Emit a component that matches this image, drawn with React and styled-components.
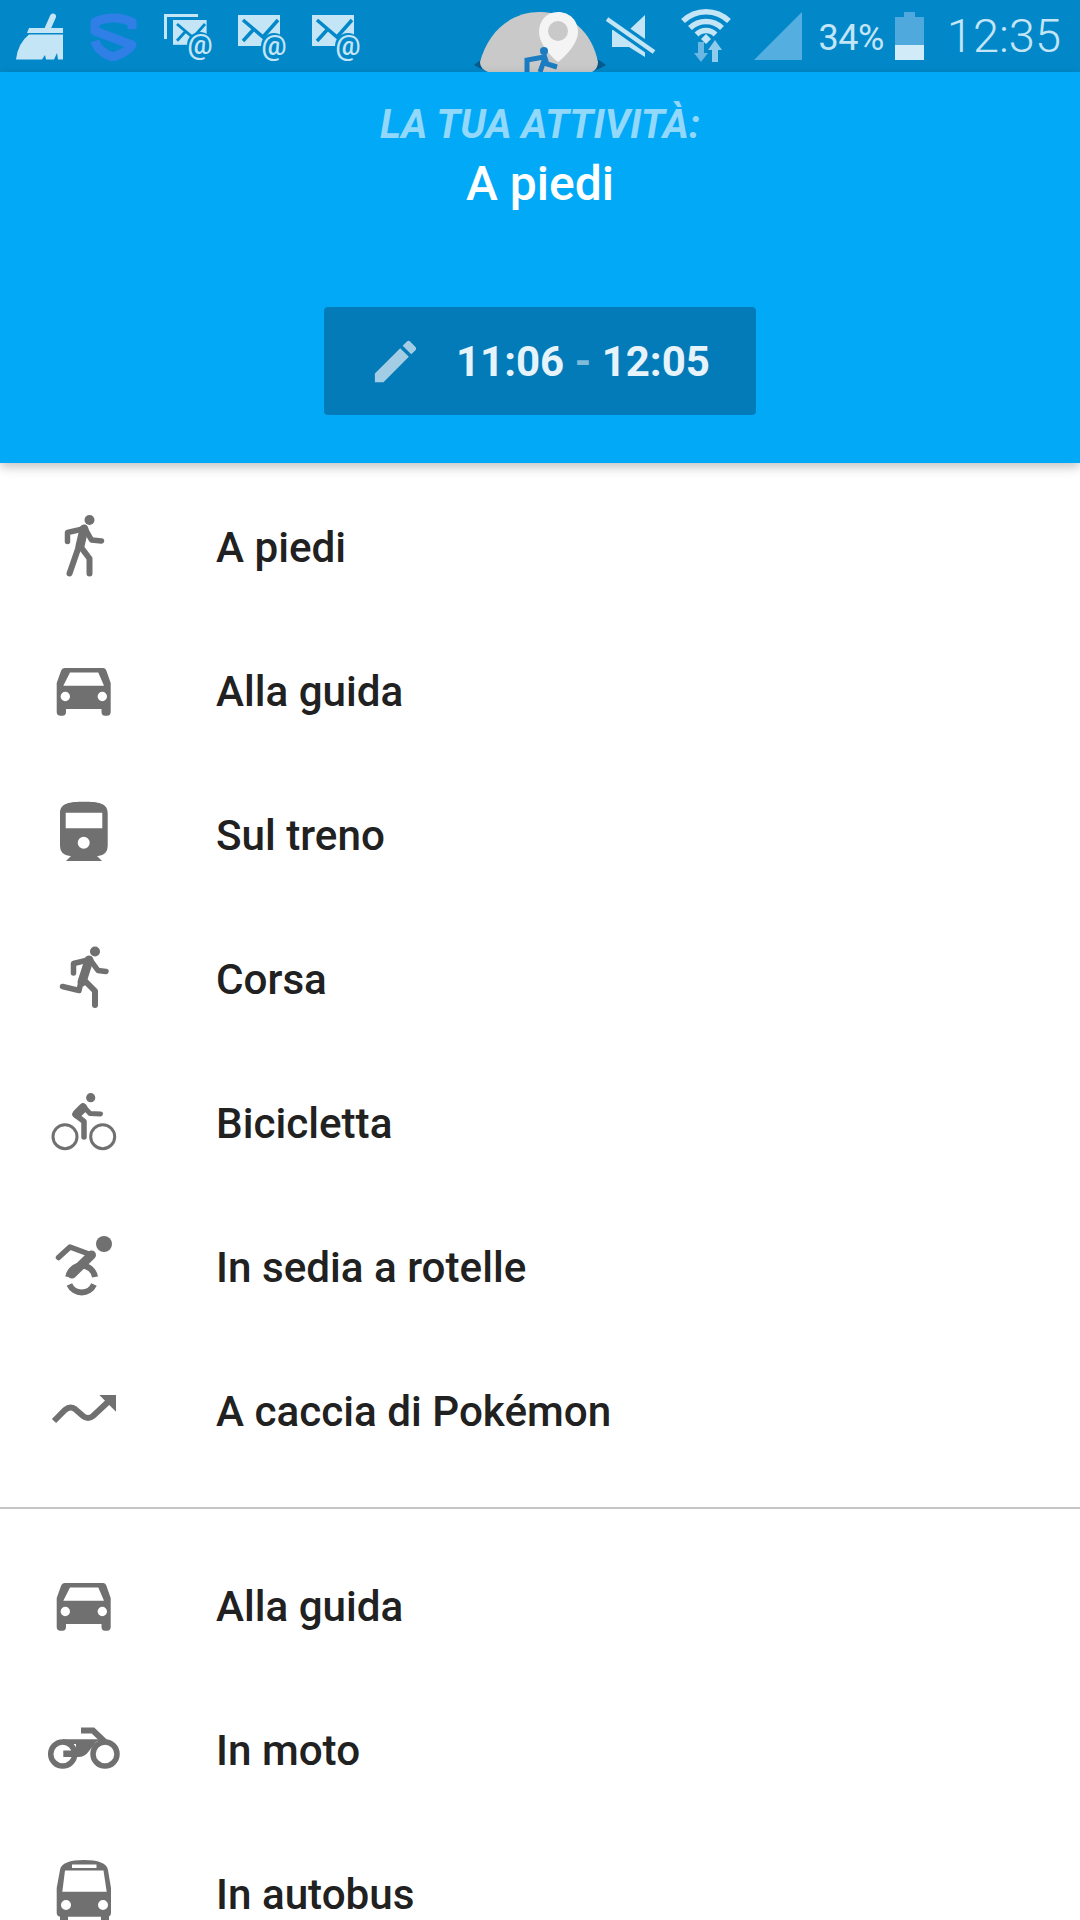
import React from 'react';
import styled, { createGlobalStyle } from 'styled-components';

const STATUS_BG = '#0288c9';
const STATUS_FG = '#c4e5f6';
const ICON_GREY = '#707070';

const GlobalStyle = createGlobalStyle`
  html, body {
    margin: 0;
    padding: 0;
    background: #fff;
  }
  body {
    font-family: Roboto, "Liberation Sans", sans-serif;
  }
`;

const Screen = styled.div`
  width: 1080px;
  height: 1920px;
  overflow: hidden;
  background: #fff;
`;

const StatusBar = styled.div`
  position: relative;
  height: 72px;
  display: flex;
  align-items: flex-start;
  background: ${STATUS_BG};
  color: ${STATUS_FG};
`;

const NotifyIcons = styled.div`
  display: flex;
  align-items: flex-start;
  padding: 13px 0 0 16px;
  gap: 26px;
`;

const SystemIcons = styled.div`
  margin-left: auto;
  display: flex;
  align-items: flex-start;
  padding-right: 19px;
`;

const StatusSvg = styled.svg`
  display: block;
  flex: none;
  margin-left: ${(p) => p.$ml || 0}px;
  margin-top: ${(p) => p.$mt || 0}px;
`;

const Percent = styled.span`
  margin: 20px 0 0 17px;
  font-size: 36px;
  line-height: 36px;
  letter-spacing: -0.5px;
`;

const Clock = styled.span`
  margin: 11px 0 0 23px;
  font-size: 47px;
  line-height: 50px;
  font-weight: 300;
`;

const FloatingBubble = styled.svg`
  position: absolute;
  left: 474px;
  top: 12px;
`;

const Header = styled.header`
  position: relative;
  height: 391px;
  box-sizing: border-box;
  padding-top: 33px;
  display: flex;
  flex-direction: column;
  align-items: center;
  background: #02a9f7;
  box-shadow: 0 4px 10px rgba(0, 0, 0, 0.24);
`;

const Eyebrow = styled.div`
  font-size: 40px;
  line-height: 40px;
  font-weight: 700;
  font-style: italic;
  color: #92d8fb;
`;

const ActivityName = styled.div`
  margin-top: 11px;
  font-size: 48px;
  line-height: 56px;
  font-weight: 500;
  color: #fff;
`;

const TimeButton = styled.div`
  margin-top: 95px;
  width: 432px;
  height: 108px;
  box-sizing: border-box;
  padding-left: 44px;
  display: flex;
  align-items: center;
  gap: 33px;
  background: #047bb9;
  border-radius: 4px;
  color: #e6f3fb;
  font-size: 42px;
  font-weight: 700;
`;

const Dash = styled.span`
  color: #7fbcdc;
`;

const List = styled.div`
  padding-top: 12px;
`;

const Row = styled.div`
  height: 144px;
  display: flex;
  align-items: center;
  padding-left: 48px;
  gap: 96px;
  font-size: 42.2px;
  font-weight: 500;
  color: #212121;
`;

const RowIcon = styled.svg`
  display: block;
  flex: none;
  width: 72px;
  height: 72px;
  overflow: visible;
  color: ${ICON_GREY};
`;

const Divider = styled.div`
  height: 2px;
  margin: 24px 0 25px;
  background: #c6c6c6;
`;

const Line = ({ d, w = 5 }) => (
  <path d={d} fill="none" stroke="currentColor" strokeWidth={w} strokeLinecap="round" strokeLinejoin="round" />
);

const Walk = () => (
  <>
    <circle cx="41.5" cy="9" r="5" fill="currentColor" />
    <Line d="M37 17.5L19.5 21.5V30.5" w={5.5} />
    <Line d="M37 17.5L43.5 29L53.5 30" w={5.5} />
    <Line d="M36 18L32 35" w={9} />
    <Line d="M31 35L21.5 62.5" w={6} />
    <Line d="M32 35L41.5 47.5V62.5" w={6} />
  </>
);

const Car = () => (
  <path
    fill="currentColor"
    fillRule="evenodd"
    d="M17 13H55Q57.5 13 58.5 16L62.7 28V57Q62.7 60.7 59 60.7H57Q53.5 60.7 53.5 57V54H18V57Q18 60.7 14.5 60.7H12.5Q8.7 60.7 8.7 57V28L13 16Q14 13 17 13ZM22 17.5H50.3L56 30.7H15.3ZM22 41.5A4.7 4.7 0 1 0 12.6 41.5A4.7 4.7 0 1 0 22 41.5ZM59 41.5A4.7 4.7 0 1 0 49.6 41.5A4.7 4.7 0 1 0 59 41.5Z"
  />
);

const Train = () => (
  <>
    <path
      fill="currentColor"
      fillRule="evenodd"
      d="M36 2.7C50 2.7 59.7 4 59.7 14V47Q59.7 56 50 57H22Q12 56 12 47V14C12 4 22 2.7 36 2.7ZM17.7 13.7H54.3V29.3H17.7ZM41.7 43.7A6 6 0 1 0 29.7 43.7A6 6 0 1 0 41.7 43.7Z"
    />
    <path fill="currentColor" d="M24 56L18 62H54L48 56Z" />
  </>
);

const Run = () => (
  <>
    <circle cx="47" cy="8.5" r="5" fill="currentColor" />
    <Line d="M42 16.5L25.5 20.5V30" w={5.5} />
    <Line d="M42 16.5L50 27.5L58 28.5" w={5.5} />
    <Line d="M41 17L34 39" w={9} />
    <Line d="M33 39L31 47.5L14.5 43.5" w={5.5} />
    <Line d="M37 38L47 48V62" w={6} />
  </>
);

const Bike = () => (
  <>
    <circle cx="42.7" cy="10.7" r="4.6" fill="currentColor" />
    <circle cx="17" cy="49.7" r="12" fill="none" stroke="currentColor" strokeWidth="3" />
    <circle cx="54.7" cy="49.7" r="12" fill="none" stroke="currentColor" strokeWidth="3" />
    <Line d="M35 19L27 27.5L36 34.5V50" w={5.5} />
    <Line d="M35 19L42 26.5L52.5 27" w={5} />
    <Line d="M35 21L29 27" w={9} />
  </>
);

const Chair = () => (
  <>
    <circle cx="56" cy="13" r="8" fill="currentColor" />
    <Line d="M10.5 26.5L22 16L43.5 24" w={5.5} />
    <path d="M43.5 24L24 43" stroke="currentColor" strokeWidth="9" fill="none" strokeLinecap="round" />
    <path d="M20.3 46A13.5 13.5 0 0 1 47 46" stroke="currentColor" strokeWidth="6" fill="none" />
    <path d="M21.4 53.5A13.5 13.5 0 0 0 46 53.5" stroke="currentColor" strokeWidth="6" fill="none" />
  </>
);

const Trend = () => (
  <>
    <path d="M6 46L17 35Q22 30.5 27 34L35 41Q40 45 45 41L60 27" fill="none" stroke="currentColor" strokeWidth="6" />
    <path d="M51.3 20H68V36.7Z" fill="currentColor" />
  </>
);

const Moto = () => (
  <>
    <circle cx="14.7" cy="40" r="12" fill="none" stroke="currentColor" strokeWidth="5.5" />
    <circle cx="57" cy="40" r="12" fill="none" stroke="currentColor" strokeWidth="5.5" />
    <path d="M15 25.3H54L48 28L41 37Q37 43 30 43H15.3V36.5H28V30H15Z" fill="currentColor" />
    <path d="M33 16.5H45L58 29" fill="none" stroke="currentColor" strokeWidth="6" />
  </>
);

const Bus = () => (
  <>
    <path
      fill="currentColor"
      fillRule="evenodd"
      d="M36 2C50 2 59 5 60 12L63 30V55Q63 58.7 59 58.7H13Q8.7 58.7 8.7 55V30L12 12C13 5 22 2 36 2ZM24 6.5H48.5V10H24ZM17 12.5H55.5L58.7 33.7H14.3ZM23 47A5 5 0 1 0 13 47A5 5 0 1 0 23 47ZM60 47A5 5 0 1 0 50 47A5 5 0 1 0 60 47Z"
    />
    <path fill="currentColor" d="M12 57H20V66H12ZM53 57H61V66H53Z" />
  </>
);

const Broom = () => (
  <StatusSvg width="48" height="48" viewBox="0 0 48 48">
    <path d="M37 3.5L31 17" stroke={STATUS_FG} strokeWidth="6" strokeLinecap="round" />
    <path d="M13 15H47V20H11Z" fill={STATUS_FG} />
    <path d="M13 21.5H47V46.5H42L41 40L38 46.5H30L29 42L26 46.5H0Q2 30 13 21.5Z" fill={STATUS_FG} />
  </StatusSvg>
);

const Shield = () => (
  <StatusSvg width="48" height="48" viewBox="0 0 48 48">
    <path
      d="M42 16V9Q23 1 5 9V18L42 32Q38 39 23 44Q8 39 5 28"
      fill="none"
      stroke="#2f7fe6"
      strokeWidth="9"
      strokeLinejoin="round"
    />
  </StatusSvg>
);

const MailAt = ({ stacked }) => (
  <StatusSvg width="48" height="48" viewBox="0 0 48 48" $mt={stacked ? 1 : 2}>
    {stacked && <path d="M1.5 25V1.5H34" fill="none" stroke={STATUS_FG} strokeWidth="3" />}
    <g transform={stacked ? 'translate(9 6) scale(0.8)' : undefined}>
      <rect x="0" y="0" width="42" height="31" fill={STATUS_FG} />
      <path d="M5 5L25 22L40 5M5 26L15 15" fill="none" stroke={STATUS_BG} strokeWidth="3.5" />
    </g>
    <circle cx="36" cy="31" r="13" fill={STATUS_BG} />
    <text x="36" y="40" textAnchor="middle" fontFamily="Roboto, sans-serif" fontSize="28" fontWeight="500" fill={STATUS_FG}>
      @
    </text>
  </StatusSvg>
);

const Mute = () => (
  <StatusSvg width="50" height="44" viewBox="0 0 50 44" $mt={15}>
    <path d="M6 15H23L39 0V42L23 32H6Z" fill={STATUS_FG} />
    <path d="M1 4L48 37" stroke={STATUS_BG} strokeWidth="11" />
    <path d="M1 4L48 37" stroke={STATUS_FG} strokeWidth="4.5" />
  </StatusSvg>
);

const Wifi = () => (
  <StatusSvg width="50" height="54" viewBox="0 0 50 54" $ml={25} $mt={8}>
    <g fill="none" stroke={STATUS_FG} strokeWidth="5.5">
      <path d="M2 13A33 33 0 0 1 48 13" />
      <path d="M9 20A23 23 0 0 1 41 20" />
      <path d="M15.5 26.5A13.5 13.5 0 0 1 34.5 26.5" />
    </g>
    <path d="M20 31L25 26L30 31L25 36Z" fill={STATUS_FG} />
    <path d="M17 34H23V45H27L20 54L13 45H17Z" fill="#69b7e2" />
    <path d="M31 54V42H27L34 32L41 42H37V54Z" fill="#8fcbec" />
  </StatusSvg>
);

const Signal = () => (
  <StatusSvg width="48" height="48" viewBox="0 0 48 48" $ml={23} $mt={12}>
    <path d="M0 48L48 0V48Z" fill="#55aee0" />
  </StatusSvg>
);

const Battery = () => (
  <StatusSvg width="29" height="48" viewBox="0 0 29 48" $ml={11} $mt={12}>
    <path d="M9 0H20V5H29V33H0V5H9Z" fill="#4fa9dc" />
    <rect x="0" y="33" width="29" height="15" fill="#d2ebf8" />
  </StatusSvg>
);

const Bubble = () => (
  <FloatingBubble width="132" height="60" viewBox="0 0 132 60">
    <path d="M0 53Q10 44 24 44H108Q122 44 132 53Q122 60 108 60H24Q10 60 0 53Z" fill="#075a8c" />
    <path d="M6 50C14 20 36 0 66 0C96 0 118 20 124 50Q124 57 118 60H14Q6 57 6 50Z" fill="#c9c9c9" />
    <path
      d="M84 0C96 0 104 9 104 20C104 31 92 44 84 50C76 44 65 31 65 20C65 9 72 0 84 0Z"
      fill="#f4f4f4"
    />
    <circle cx="84" cy="19" r="10" fill="#c9c9c9" />
    <circle cx="70" cy="39" r="4" fill="#1b7cc2" />
    <path d="M53 60V48L70 45" fill="none" stroke="#1b7cc2" strokeWidth="5" />
    <path d="M66 60L71 46L73 52L83 55" fill="none" stroke="#1b7cc2" strokeWidth="5" />
  </FloatingBubble>
);

const Pencil = () => (
  <StatusSvg width="55" height="55" viewBox="0 0 24 24">
    <path
      d="M3 17.25V21h3.75L17.81 9.94l-3.75-3.75L3 17.25zM20.71 7.04c.39-.39.39-1.02 0-1.41l-2.34-2.34c-.39-.39-1.02-.39-1.41 0l-1.83 1.83 3.75 3.75 1.83-1.83z"
      fill="#a3cde4"
    />
  </StatusSvg>
);

const topRows = [
  { label: 'A piedi', icon: Walk },
  { label: 'Alla guida', icon: Car },
  { label: 'Sul treno', icon: Train },
  { label: 'Corsa', icon: Run },
  { label: 'Bicicletta', icon: Bike },
  { label: 'In sedia a rotelle', icon: Chair },
  { label: 'A caccia di Pokémon', icon: Trend },
];

const bottomRows = [
  { label: 'Alla guida', icon: Car },
  { label: 'In moto', icon: Moto },
  { label: 'In autobus', icon: Bus },
];

const ActivityRow = ({ label, icon: Icon }) => (
  <Row>
    <RowIcon viewBox="0 0 72 72">
      <Icon />
    </RowIcon>
    <span>{label}</span>
  </Row>
);

export default function App() {
  return (
    <Screen>
      <GlobalStyle />
      <StatusBar>
        <NotifyIcons>
          <Broom />
          <Shield />
          <MailAt stacked />
          <MailAt />
          <MailAt />
        </NotifyIcons>
        <Bubble />
        <SystemIcons>
          <Mute />
          <Wifi />
          <Signal />
          <Percent>34%</Percent>
          <Battery />
          <Clock>12:35</Clock>
        </SystemIcons>
      </StatusBar>
      <Header>
        <Eyebrow>LA TUA ATTIVITÀ:</Eyebrow>
        <ActivityName>A piedi</ActivityName>
        <TimeButton>
          <Pencil />
          <span>
            11:06 <Dash>-</Dash> 12:05
          </span>
        </TimeButton>
      </Header>
      <List>
        {topRows.map((r) => (
          <ActivityRow key={r.label} {...r} />
        ))}
        <Divider />
        {bottomRows.map((r) => (
          <ActivityRow key={r.label} {...r} />
        ))}
      </List>
    </Screen>
  );
}
